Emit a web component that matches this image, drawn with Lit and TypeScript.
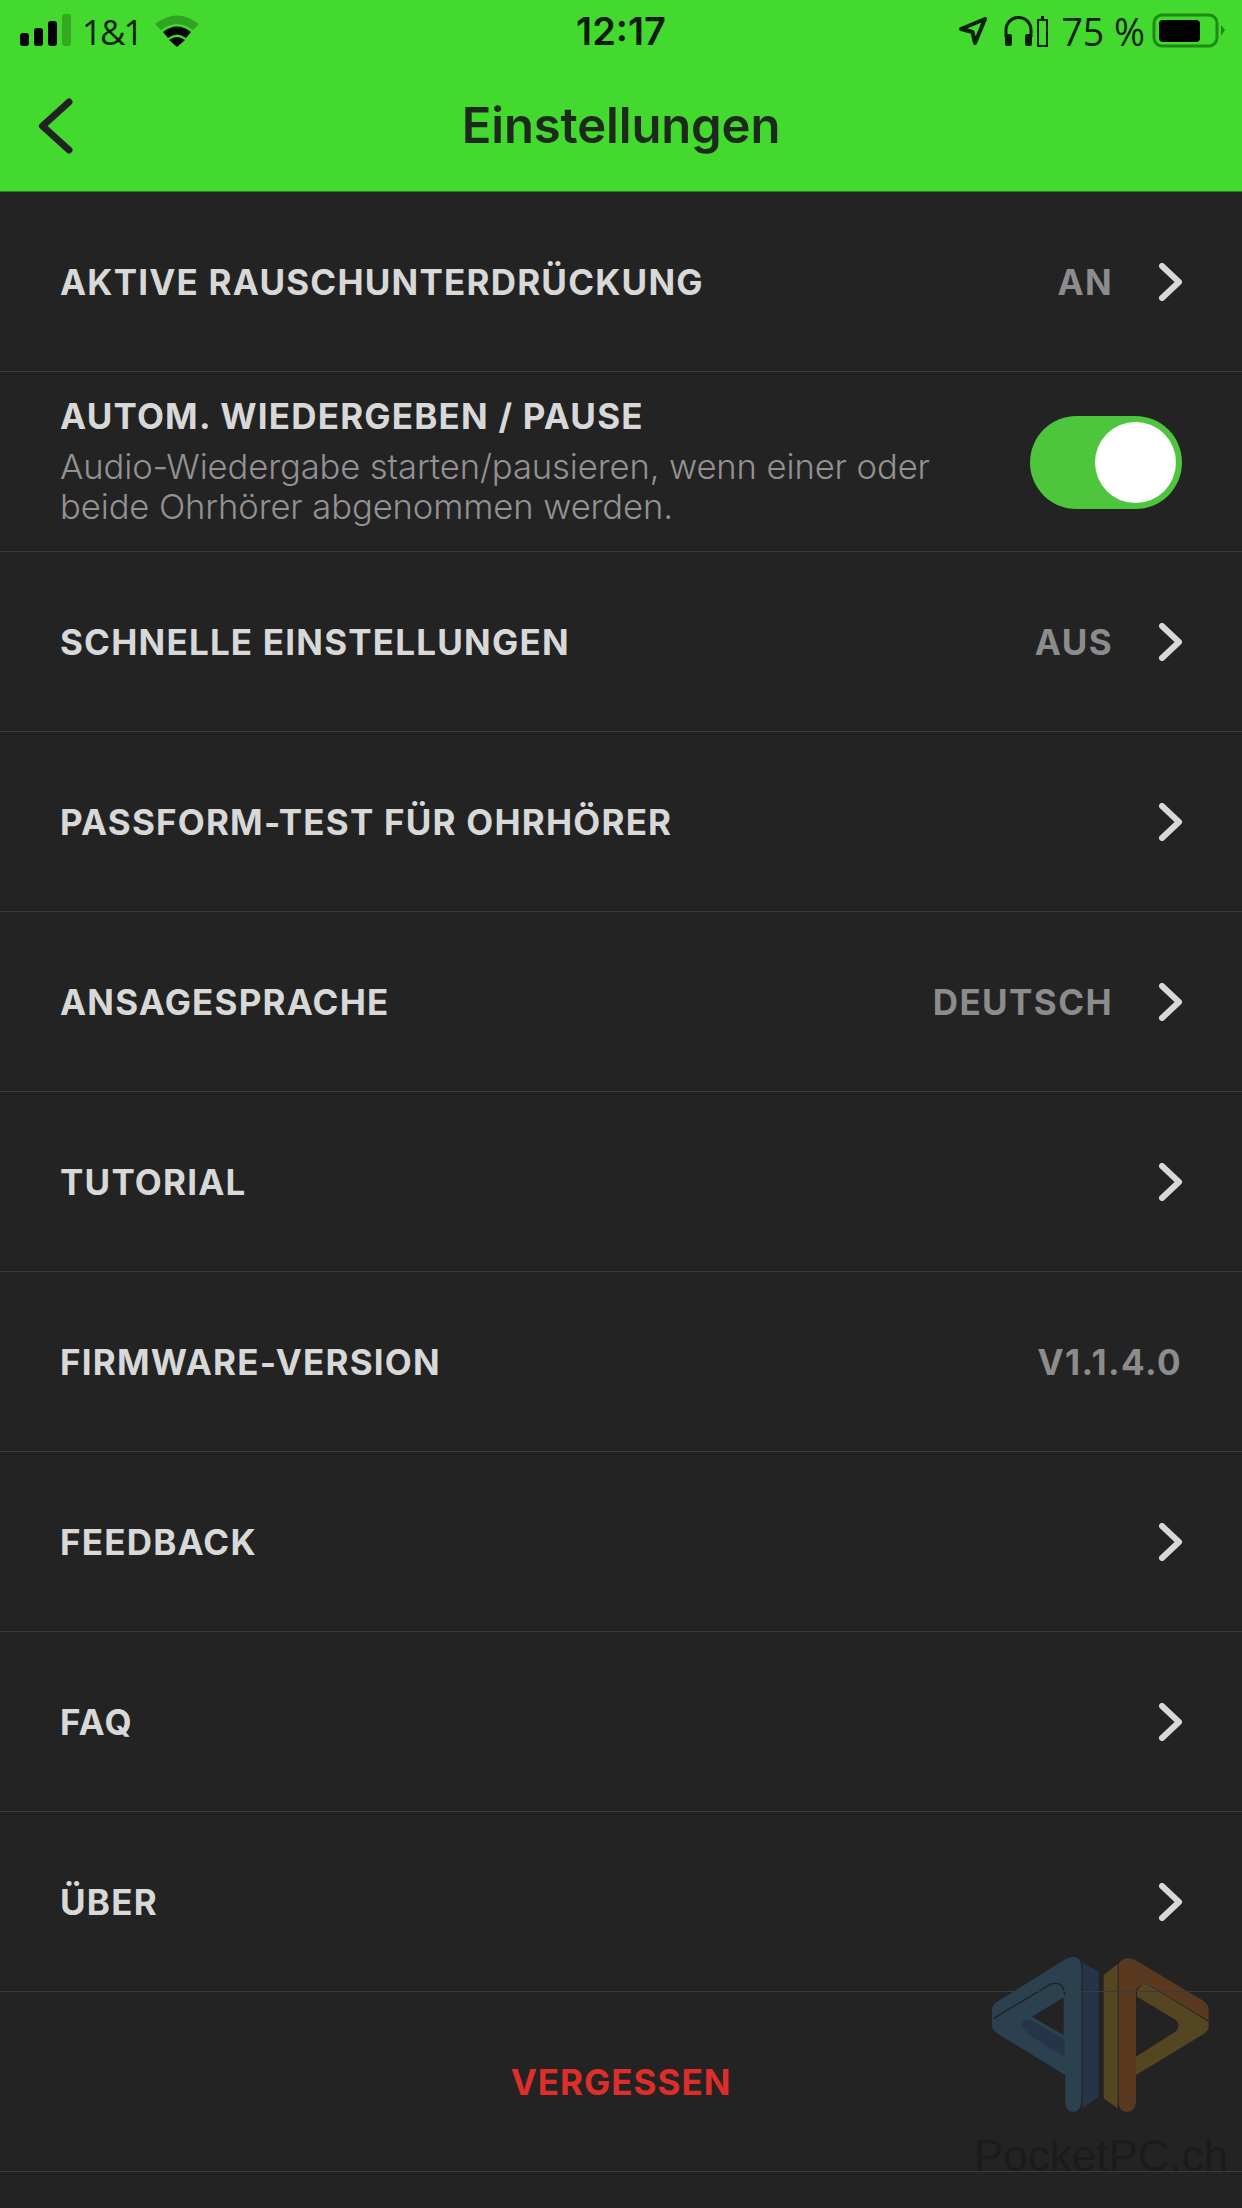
import { LitElement, html, css } from "lit";
import { customElement } from "lit/decorators.js";

const chevron = html`<svg class="chev" width="26" height="38" viewBox="0 0 26 38"><path d="M5 3 L22 19 L5 35" fill="none" stroke="#d8d8d8" stroke-width="6" stroke-linecap="round" stroke-linejoin="round"/></svg>`;

type Row = { label: string; value?: string; chev?: boolean; };
const rows: Row[] = [
  { label: "SCHNELLE EINSTELLUNGEN", value: "AUS", chev: true },
  { label: "PASSFORM-TEST FÜR OHRHÖRER", chev: true },
  { label: "ANSAGESPRACHE", value: "DEUTSCH", chev: true },
  { label: "TUTORIAL", chev: true },
  { label: "FIRMWARE-VERSION", value: "V1.1.4.0" },
  { label: "FEEDBACK", chev: true },
  { label: "FAQ", chev: true },
  { label: "ÜBER", chev: true },
];

@customElement("app-root")
export class AppRoot extends LitElement {
  static styles = css`
    :host { display: block; width: 1242px; height: 2208px; background: #232323; overflow: hidden; position: relative; font-family: Inter, "Liberation Sans", sans-serif; }
    .head { height: 192px; background: #43d92e; box-sizing: border-box; border-bottom: 1px solid #2a7d22; position: relative; }
    .status { height: 62px; display: flex; align-items: center; padding: 0 16px 0 20px; color: #0a1f08; font-family: "Open Sans", sans-serif; }
    .status .left, .status .right { display: flex; align-items: center; flex: 1; }
    .status .right { justify-content: flex-end; }
    .clock { font-weight: 600; font-size: 38px; color: #0a1a08; font-family: Inter, sans-serif; margin-left: -4px; }
    .carrier { margin: 0 12px 0 10px; font-size: 35px; letter-spacing: -2px; }
    .pct { margin: 0 7px 0 13px; font-size: 37.5px; }
    .nav { height: 129px; display: flex; align-items: center; justify-content: center; position: relative; }
    .nav h1 { margin: 0 0 2px; font-size: 49px; font-weight: 600; color: #1d2a1b; letter-spacing: -0.15px; }
    .back { position: absolute; left: 38px; top: 36px; }
    .row { height: 180px; box-sizing: border-box; border-bottom: 1px solid #3b3b3b; display: flex; align-items: center; padding: 0 60px; position: relative; }
    .label { font-size: 35px; font-weight: 650; color: #d8d8d8; letter-spacing: 1.2px; flex: 1; white-space: nowrap; }
    .value { font-size: 35px; font-weight: 650; color: #8c8c8c; letter-spacing: 1.4px; }
    .value.gap { margin-right: 44px; }
    .chev { display: block; margin-right: -1px; }
    .texts { flex: 1; margin-top: -2px; }
    .texts .label { margin-bottom: 9px; line-height: 42px; }
    .desc { font-size: 34.6px; line-height: 40.5px; font-weight: 300; color: #929292; letter-spacing: -0.1px; white-space: nowrap; }
    .toggle { width: 152px; height: 93px; border-radius: 47px; background: #4dc53c; position: relative; margin-top: 1px; flex: none; }
    .knob { position: absolute; right: 6px; top: 6px; width: 81px; height: 81px; border-radius: 50%; background: #fff; }
    .forget { justify-content: center; }
    .forget span { font-size: 35px; font-weight: 700; color: #dd2e2b; letter-spacing: 1px; }
    .wm { position: absolute; left: 942px; top: 1900px; }
    .wmtext { position: absolute; left: 974px; top: 2134px; font-size: 44px; color: #1b1b1b; font-family: "Liberation Sans", sans-serif; line-height: 1; }
  `;

  render() {
    return html`
      <div class="head">
        <div class="status">
          <div class="left">
            <svg width="52" height="34" viewBox="0 0 52 34">
              <rect x="0" y="19" width="9" height="13" rx="3" fill="#000"/>
              <rect x="14" y="14" width="9" height="18" rx="3" fill="#000"/>
              <rect x="28" y="7" width="9" height="25" rx="3" fill="#000"/>
              <rect x="42" y="0" width="9" height="32" rx="3" fill="#33a820"/>
            </svg>
            <span class="carrier">1&amp;1</span>
            <svg width="46" height="34" viewBox="0 0 46 34">
              <path d="M1 10 Q23 -7 45 10 L39 16 Q23 4 7 16 Z" fill="#2fa41e"/>
              <path d="M9 18 Q23 7 37 18 L32 24 Q23 17 14 24 Z" fill="#000"/>
              <path d="M15 26 Q23 20 31 26 L23 33 Z" fill="#000"/>
            </svg>
          </div>
          <div class="clock">12:17</div>
          <div class="right">
            <svg width="30" height="30" viewBox="0 0 30 30" style="margin-right:16px"><path d="M3 13 L27 3 L17 27 L14.5 16 Z" fill="none" stroke="#0a1f08" stroke-width="4" stroke-linejoin="round"/></svg>
            <svg width="44" height="32" viewBox="0 0 44 32">
              <path d="M2 22 V15 A12.5 12.5 0 0 1 27 15 V22" fill="none" stroke="#0a1f08" stroke-width="3"/>
              <rect x="1" y="19" width="7" height="12" rx="2" fill="#0a1f08"/><rect x="21" y="19" width="7" height="12" rx="2" fill="#0a1f08"/>
              <rect x="34" y="5" width="9" height="26" fill="none" stroke="#0a1f08" stroke-width="2"/><rect x="37" y="1" width="3" height="3" fill="#0a1f08"/>
            </svg>
            <span class="pct">75 %</span>
            <svg width="74" height="36" viewBox="0 0 74 36">
              <rect x="2" y="2" width="63" height="31" rx="8" fill="none" stroke="#1f8a15" stroke-width="3"/>
              <rect x="7" y="7" width="41" height="22" rx="4" fill="#000"/>
              <path d="M69 12 L73 17 L69 23 Z" fill="#1f8a15"/>
            </svg>
          </div>
        </div>
        <div class="nav">
          <svg class="back" width="40" height="58" viewBox="0 0 40 58"><path d="M31 4 L4.5 28 L31 52" fill="none" stroke="#222" stroke-width="7" stroke-linecap="round" stroke-linejoin="round"/></svg>
          <h1>Einstellungen</h1>
        </div>
      </div>
      <svg class="wm" width="300" height="308" viewBox="0 0 900 924">
        <path fill-rule="evenodd" d="M150 330 Q150 315 165 305 L370 178 Q418 155 418 205 L418 605 Q415 635 395 635 Q370 635 370 605 L370 525 L165 400 Q150 390 150 375 Z M365 292 L270 350 L365 405 Z" fill="#2c4150"/>
        <path d="M240 378 Q240 358 262 358 L368 420 L368 472 L255 400 Z" fill="#26344a"/>
        <path d="M155 355 L325 253 Q365 240 368 285" fill="none" stroke="#1c2228" stroke-width="4"/>
        <path d="M422 188 L470 215 L470 590 L422 625 Z" fill="#26344a"/>
        <path d="M485 225 L527 192 L527 625 L485 595 Z" fill="#544620"/>
        <path d="M530 192 Q545 165 580 180 L780 300 Q800 312 800 330 L800 362 L622 255 Q585 250 582 275 L582 605 Q580 635 555 635 Q530 635 530 605 Z" fill="#59391f"/>
        <path d="M585 272 Q600 245 625 258 L800 366 L800 380 Q798 395 780 405 L582 525 L582 470 L700 395 Q720 375 698 358 L585 290 Z" fill="#544620"/>
      </svg>
      <div class="wmtext">PocketPC.ch</div>
      <div class="row"><span class="label">AKTIVE RAUSCHUNTERDRÜCKUNG</span><span class="value gap">AN</span>${chevron}</div>
      <div class="row">
        <div class="texts">
          <div class="label">AUTOM. WIEDERGEBEN / PAUSE</div>
          <div class="desc">Audio-Wiedergabe starten/pausieren, wenn einer oder<br>beide Ohrhörer abgenommen werden.</div>
        </div>
        <div class="toggle"><div class="knob"></div></div>
      </div>
      ${rows.map(r => html`<div class="row"><span class="label">${r.label}</span>${r.value ? html`<span class="value ${r.chev ? "gap" : ""}">${r.value}</span>` : ""}${r.chev ? chevron : ""}</div>`)}
      <div class="row forget"><span>VERGESSEN</span></div>
    `;
  }
}
